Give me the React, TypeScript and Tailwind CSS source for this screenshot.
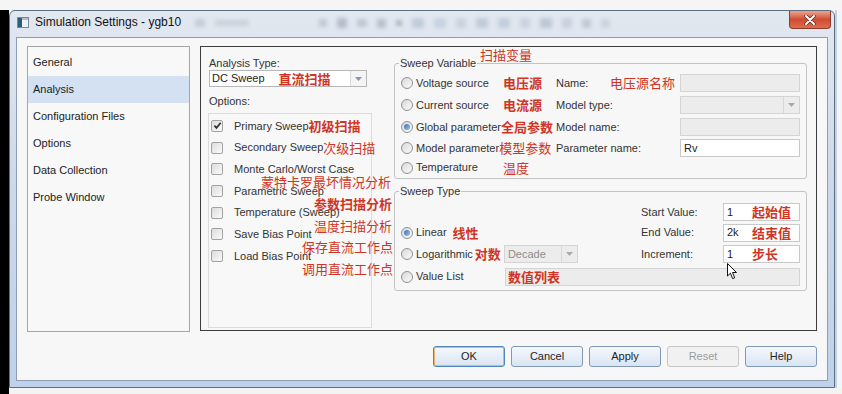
import type { ReactNode } from "react";

const red = "font-['Noto_Sans_CJK_SC',sans-serif] text-[13px] leading-[16px] text-[#cf3424] whitespace-nowrap";

function Radio({ checked }: { checked?: boolean }) {
  return (
    <span className="flex h-[12px] w-[12px] shrink-0 items-center justify-center rounded-full border border-[#8f9293] bg-linear-to-br from-[#d9d9d9] to-[#fbfbfb]">
      {checked ? <span className="h-[6px] w-[6px] rounded-full bg-linear-to-br from-[#3b6fb3] to-[#9cc3ea]" /> : null}
    </span>
  );
}

function Check({ checked }: { checked?: boolean }) {
  return (
    <span className="flex h-[12px] w-[12px] shrink-0 items-center justify-center rounded-[2px] border border-[#a2a2a2] bg-linear-to-br from-[#dcdcdc] to-[#fafafa]">
      {checked ? (
        <svg width="9" height="9" viewBox="0 0 9 9">
          <path d="M1.4 4.6 L3.5 6.9 L7.7 1.7" fill="none" stroke="#2f2f2f" strokeWidth="1.7" />
        </svg>
      ) : null}
    </span>
  );
}

function Arrow({ muted }: { muted?: boolean }) {
  return (
    <svg width="7" height="4" viewBox="0 0 7 4">
      <path d="M0 0 H7 L3.5 4 Z" fill={muted ? "#a9a9a9" : "#8796a8"} />
    </svg>
  );
}

function RadioRow({ checked, label, children }: { checked?: boolean; label: string; children?: ReactNode }) {
  return (
    <div className="flex w-[155px] shrink-0 items-center whitespace-nowrap">
      <Radio checked={checked} />
      <span className="ml-[3px]">{label}</span>
      {children}
    </div>
  );
}

function ValueField({ value, note }: { value: string; note: string }) {
  return (
    <div className="flex h-[18px] w-[77px] items-center border border-[#c9c9c9] bg-white pl-[3px]">
      <span className="w-[25px] text-[#222]">{value}</span>
      <span className={`${red} font-bold`}>{note}</span>
    </div>
  );
}

const options = [
  { label: "Primary Sweep", checked: true, note: "初级扫描" },
  { label: "Secondary Sweep", note: "次级扫描" },
  { label: "Monte Carlo/Worst Case" },
  { label: "Parametric Sweep" },
  { label: "Temperature (Sweep)" },
  { label: "Save Bias Point" },
  { label: "Load Bias Point" },
];

const nav = ["General", "Analysis", "Configuration Files", "Options", "Data Collection", "Probe Window"];

function TitleBar() {
  return (
    <div className="flex h-[26px] shrink-0 items-start">
      <svg className="ml-[7px] mt-[6px]" width="12" height="11" viewBox="0 0 12 11">
        <rect x="0.5" y="0.5" width="11" height="10" fill="#eef2f6" stroke="#7d8896" />
        <rect x="1" y="1" width="4" height="9" fill="#2d5f7c" />
        <rect x="5" y="1" width="6" height="2" fill="#aebfd2" />
      </svg>
      <span className="ml-[6px] mt-[4px] text-[12px] leading-[14px] text-[#111]">Simulation Settings - ygb10</span>
      <div className="ml-[14px] mt-[7px] flex flex-1 items-center gap-[10px] opacity-40 blur-[2px]">
        <span className="h-[8px] w-[10px] bg-[#9aa3ad]" />
        <span className="h-[6px] w-[34px] bg-[#a8b0ba]" />
        <span className="ml-[60px] h-[8px] w-[8px] bg-[#8f99a5]" />
        <span className="h-[10px] w-[10px] bg-[#6f7f91]" />
        <span className="h-[8px] w-[10px] bg-[#8896a6]" />
        <span className="h-[9px] w-[9px] bg-[#7b8594]" />
        <span className="h-[6px] w-[6px] rounded-full bg-[#3d4b5b]" />
        <span className="h-[10px] w-[12px] bg-[#8fa2ba]" />
        <span className="h-[10px] w-[12px] bg-[#9fb1c6]" />
        <span className="h-[10px] w-[10px] bg-[#a5b4c4]" />
        <span className="h-[10px] w-[12px] bg-[#8fa0b4]" />
        <span className="h-[10px] w-[12px] bg-[#96a8bf]" />
        <span className="h-[10px] w-[10px] bg-[#a6b5c6]" />
        <span className="h-[10px] w-[12px] bg-[#8697ab]" />
        <span className="h-[10px] w-[10px] bg-[#9fb0c4]" />
        <span className="h-[9px] w-[9px] bg-[#8a9aab]" />
        <span className="h-[9px] w-[9px] bg-[#a9b6c4]" />
      </div>
      <div className="mr-[3px] flex h-[18px] w-[42px] items-center justify-center rounded-b-[4px] border border-t-0 border-[#8c3b2a] bg-linear-to-b from-[#eaa48f] via-[#cf4b31] to-[#de6c4e]">
        <svg width="12" height="10" viewBox="0 0 12 10">
          <path d="M2 1 L10 9 M10 1 L2 9" stroke="#5a2418" strokeWidth="3.4" strokeLinecap="round" />
          <path d="M2 1 L10 9 M10 1 L2 9" stroke="#ffffff" strokeWidth="2" strokeLinecap="round" />
        </svg>
      </div>
    </div>
  );
}

function AnalysisPanel() {
  return (
    <div className="flex h-[285px] w-[618px] border border-[#3d3d3d] bg-[#f7f7f7] pl-[7px] pt-[9px] text-[11px] text-[#333]">
      <div className="flex w-[164px] shrink-0 flex-col">
        <div className="h-[14px] pl-[1px] leading-[14px]">Analysis Type:</div>
        <div className="ml-[1px] flex h-[17px] w-[158px] items-center border border-[#b7b7b7] bg-white">
          <span className="pl-[2px] text-[#222]">DC Sweep</span>
          <span className={`${red} ml-[14px] font-bold`}>直流扫描</span>
          <span className="ml-auto flex h-full w-[16px] items-center justify-center border-l border-[#d8d8d8] bg-[#f4f4f4]">
            <Arrow />
          </span>
        </div>
        <div className="mt-[7px] h-[14px] pl-[1px] leading-[14px]">Options:</div>
        <div className="relative mt-[5px] h-[215px] w-[164px] border border-[#dcdcdc] bg-[#f8f8f8] pl-[2px] pt-[1px]">
          {options.map((o) => (
            <div key={o.label} className="flex h-[21.7px] items-center whitespace-nowrap">
              <Check checked={o.checked} />
              <span className="ml-[11px]">{o.label}</span>
              {o.note ? <span className={`${red} ${o.checked ? "font-bold" : ""}`}>{o.note}</span> : null}
            </div>
          ))}
          <span className={`${red} absolute left-[52px] top-[60px]`}>蒙特卡罗最坏情况分析</span>
          <span className={`${red} absolute left-[105px] top-[82px] font-bold`}>参数扫描分析</span>
          <span className={`${red} absolute left-[105px] top-[104px]`}>温度扫描分析</span>
          <span className={`${red} absolute left-[93px] top-[125px]`}>保存直流工作点</span>
          <span className={`${red} absolute left-[93px] top-[147px]`}>调用直流工作点</span>
        </div>
      </div>

      <div className="ml-[22px] flex w-[413px] shrink-0 flex-col">
        <div className="relative">
          <span className={`${red} absolute left-[86px] top-[-9px]`}>扫描变量</span>
          <fieldset className="rounded-[3px] border border-[#c3c3c3] px-[6px] pb-[1px] pt-[2px]">
            <legend className="-ml-[2px] px-[1px] leading-[14px]">Sweep Variable</legend>
            <div className="flex h-[22px] items-center">
              <RadioRow label="Voltage source">
                <span className={`${red} ml-auto mr-[2px] w-[51px] font-bold`}>电压源</span>
              </RadioRow>
              <div className="flex w-[124px] shrink-0 items-center">
                <span className="w-[54px]">Name:</span>
                <span className={red}>电压源名称</span>
              </div>
              <div className="h-[18px] w-[120px] border border-[#d4d4d4] bg-[#ececec]" />
            </div>
            <div className="flex h-[22px] items-center">
              <RadioRow label="Current source">
                <span className={`${red} ml-auto mr-[2px] w-[51px] font-bold`}>电流源</span>
              </RadioRow>
              <div className="w-[124px] shrink-0">Model type:</div>
              <div className="flex h-[18px] w-[120px] items-center border border-[#d4d4d4] bg-[#ececec]">
                <span className="ml-auto flex h-full w-[16px] items-center justify-center border-l border-[#d8d8d8]">
                  <Arrow muted />
                </span>
              </div>
            </div>
            <div className="flex h-[22px] items-center">
              <RadioRow checked label="Global parameter">
                <span className={`${red} font-bold`}>全局参数</span>
              </RadioRow>
              <div className="w-[124px] shrink-0">Model name:</div>
              <div className="h-[18px] w-[120px] border border-[#d4d4d4] bg-[#ececec]" />
            </div>
            <div className="flex h-[20px] items-center">
              <RadioRow label="Model parameter">
                <span className={red}>模型参数</span>
              </RadioRow>
              <div className="w-[124px] shrink-0">Parameter name:</div>
              <div className="flex h-[18px] w-[120px] items-center border border-[#c9c9c9] bg-white pl-[3px] text-[#222]">Rv</div>
            </div>
            <div className="flex h-[19px] items-center">
              <RadioRow label="Temperature">
                <span className={`${red} ml-auto mr-[2px] w-[51px]`}>温度</span>
              </RadioRow>
            </div>
          </fieldset>
        </div>

        <div className="relative mt-[5px]">
          <fieldset className="rounded-[3px] border border-[#c3c3c3] px-[6px] pb-[2px] pt-[4px]">
            <legend className="-ml-[2px] px-[1px] leading-[14px]">Sweep Type</legend>
            <div className="flex h-[20px] items-center">
              <div className="w-[240px] shrink-0" />
              <span className="w-[82px] shrink-0">Start Value:</span>
              <ValueField value="1" note="起始值" />
            </div>
            <div className="flex h-[21px] items-center">
              <div className="flex w-[240px] shrink-0 items-center">
                <Radio checked />
                <span className="ml-[3px]">Linear</span>
                <span className={`${red} ml-[6px] font-bold`}>线性</span>
              </div>
              <span className="w-[82px] shrink-0">End Value:</span>
              <ValueField value="2k" note="结束值" />
            </div>
            <div className="flex h-[22px] items-center">
              <div className="flex w-[240px] shrink-0 items-center whitespace-nowrap">
                <Radio />
                <span className="ml-[3px]">Logarithmic</span>
                <span className={`${red} ml-[2px] font-bold`}>对数</span>
                <div className="ml-[3px] flex h-[18px] w-[74px] items-center border border-[#d4d4d4] bg-[#ececec] pl-[3px] text-[#8c8c8c]">
                  Decade
                  <span className="ml-auto flex h-full w-[16px] items-center justify-center border-l border-[#d8d8d8]">
                    <Arrow muted />
                  </span>
                </div>
              </div>
              <span className="w-[82px] shrink-0">Increment:</span>
              <ValueField value="1" note="步长" />
            </div>
            <div className="flex h-[23px] items-center">
              <Radio />
              <span className="ml-[3px]">Value List</span>
              <div className="ml-auto flex h-[18px] w-[295px] items-center border border-[#d4d4d4] bg-[#ececec] pl-[2px]">
                <span className={`${red} font-bold`}>数值列表</span>
              </div>
            </div>
          </fieldset>
          <svg className="absolute left-[333px] top-[79px]" width="11" height="17" viewBox="0 0 11 17">
            <path d="M0.5 0.5 L0.5 13 L3.4 10.2 L5.6 15.6 L7.7 14.8 L5.5 9.5 L9.5 9.5 Z" fill="#ffffff" stroke="#111" strokeWidth="1" />
          </svg>
        </div>
      </div>
    </div>
  );
}

function Button({ label, primary, disabled }: { label: string; primary?: boolean; disabled?: boolean }) {
  if (disabled) {
    return (
      <div className="flex h-[21px] w-[72px] items-center justify-center rounded-[3px] border border-[#c6c6c6] bg-[#f1f1f1] text-[#9b9b9b]">
        {label}
      </div>
    );
  }
  return (
    <div
      className={`flex h-[21px] w-[72px] items-center justify-center rounded-[3px] border bg-linear-to-b from-[#f5f8fc] to-[#d9e5f3] text-[#1e1e1e] ${
        primary ? "border-[#4f86bd] shadow-[inset_0_0_0_1px_#eab66c]" : "border-[#7f98b6]"
      }`}
    >
      {label}
    </div>
  );
}

export default function App() {
  return (
    <div className="flex h-[394px] w-[842px] flex-col overflow-hidden bg-[#f3f3f3] font-['Liberation_Sans','Noto_Sans_CJK_SC',sans-serif]">
      <div className="h-[10px] shrink-0 bg-[#f5f5f5]" />
      <div className="flex h-[378px] shrink-0">
        <div className="w-[9px] shrink-0 bg-black" />
        <div className="flex w-[826px] shrink-0 flex-col rounded-t-[6px] border border-[#5e6e82] bg-linear-to-b from-[#e2e8f0] via-[#cbd8e8] to-[#bfd2ea]">
          <TitleBar />
          <div className="mx-[6px] flex h-[344px] flex-col border border-[#8c9db4] bg-[#f7f7f7] pl-[10px] pr-[10px] pt-[8px]">
            <div className="flex gap-[10px]">
              <div className="h-[286px] w-[163px] shrink-0 border border-[#a6a6a6] bg-[#f8f8f8] pt-[2px] text-[11px] text-[#222]">
                {nav.map((n) => (
                  <div
                    key={n}
                    className={`flex h-[27px] items-center pl-[5px] ${n === "Analysis" ? "bg-[#d3e1f2]" : ""}`}
                  >
                    {n}
                  </div>
                ))}
              </div>
              <AnalysisPanel />
            </div>
            <div className="mt-[14px] flex justify-end gap-[6px] text-[11px]">
              <Button label="OK" primary />
              <Button label="Cancel" />
              <Button label="Apply" />
              <Button label="Reset" disabled />
              <Button label="Help" />
            </div>
          </div>
        </div>
        <div className="w-[7px] shrink-0 border-l-2 border-[#c3d3e6] bg-[#f4f5f7]" />
      </div>
      <div className="flex flex-1">
        <div className="w-[9px] bg-black" />
        <div className="flex-1 bg-[#f3f3f3]" />
      </div>
    </div>
  );
}
